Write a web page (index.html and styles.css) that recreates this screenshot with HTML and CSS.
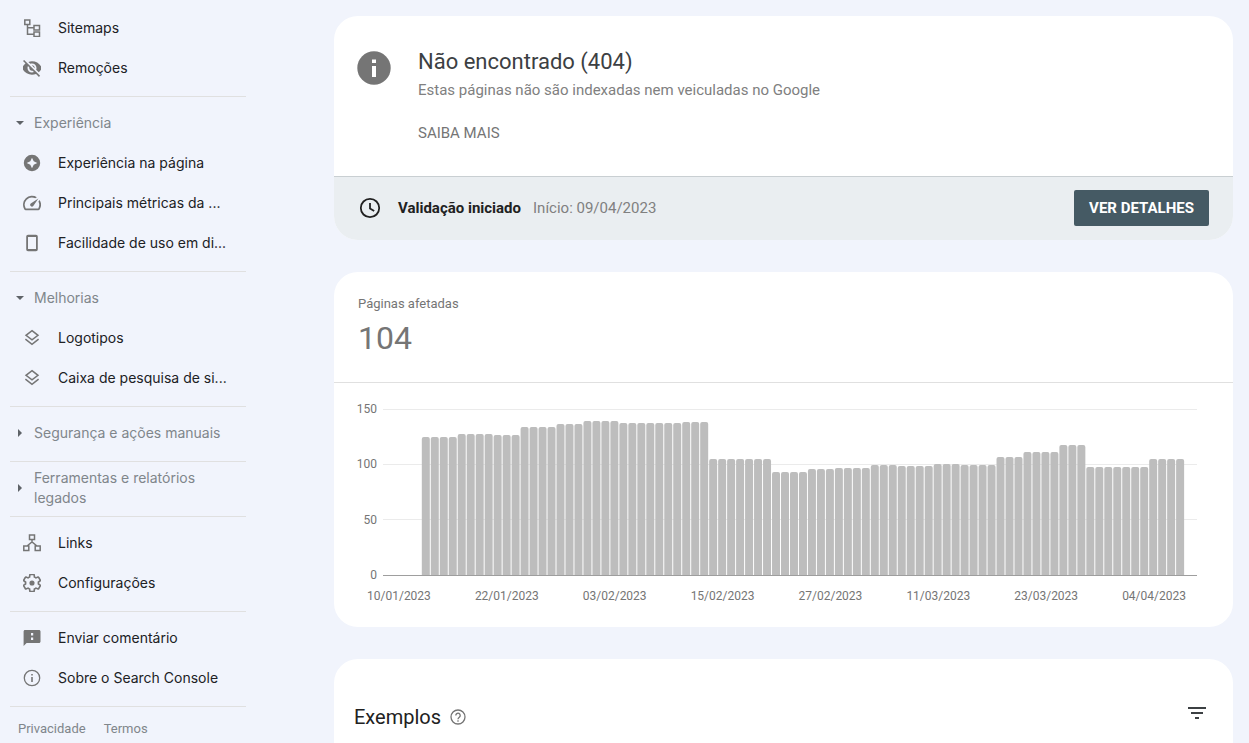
FILE: index.html
```html
<!DOCTYPE html>
<html lang="pt">
<head>
<meta charset="utf-8">
<meta name="viewport" content="width=device-width, initial-scale=1">
<title>Search Console – Não encontrado (404)</title>
<link rel="stylesheet" href="styles.css">
</head>
<body>
<div class="app">
  <nav class="sidebar" aria-label="Navegação">
    <a class="item" href="#"><svg class="icon" viewBox="0 0 18 18"><g class="line"><path d="M1.800 1h5v4.500h-5zM11 6.500h5.500v4.500H11zM11 13h5.500v4.500H11zM4.500 5.500v9.700H11M4.500 8.700H11"/></g></svg><span class="label">Sitemaps</span></a>
    <a class="item" href="#"><svg class="icon" viewBox="2 3 20 18"><path d="M12 7c2.760 0 5 2.240 5 5 0 .65-.13 1.260-.36 1.830l2.920 2.920c1.510-1.260 2.700-2.890 3.430-4.750-1.730-4.390-6-7.500-11-7.500-1.400 0-2.740.25-3.980.7l2.160 2.160C10.740 7.130 11.350 7 12 7zM2 4.270l2.280 2.280.46.46C3.080 8.300 1.780 10.020 1 12c1.730 4.390 6 7.500 11 7.500 1.550 0 3.030-.3 4.380-.84l.42.42L19.730 22 21 20.730 3.270 3 2 4.270zM7.530 9.800l1.550 1.550c-.05.21-.08.43-.08.65 0 1.660 1.340 3 3 3 .22 0 .44-.03.65-.08l1.550 1.550c-.67.33-1.410.53-2.200.53-2.760 0-5-2.240-5-5 0-.79.2-1.530.53-2.200zm4.310-.78l3.150 3.150.02-.16c0-1.660-1.340-3-3-3l-.17.01z"/></svg><span class="label">Remoções</span></a>
    <hr class="rule">
    <a class="section" href="#"><svg class="caret" viewBox="0 0 8 8"><path d="M0 2h8L4 6z"/></svg><span>Experiência</span></a>
    <a class="item" href="#"><svg class="icon" viewBox="0 0 18 18"><path fill-rule="evenodd" d="M9 .8a8.200 8.200 0 1 0 0 16.400A8.200 8.200 0 0 0 9 .8zm0 2.900l1.700 3.600L14.300 9l-3.600 1.700L9 14.300l-1.700-3.600L3.700 9l3.600-1.700z"/></svg><span class="label">Experiência na página</span></a>
    <a class="item" href="#"><svg class="icon" viewBox="2 2 20 20"><path d="M20.380 8.570l-1.230 1.850a8 8 0 0 1-.22 7.580H5.070A8 8 0 0 1 15.580 6.850l1.850-1.230A10 10 0 0 0 3.350 19a2 2 0 0 0 1.720 1h13.850a2 2 0 0 0 1.740-1 10 10 0 0 0-.27-10.440zm-9.790 6.840a2 2 0 0 0 2.830 0l5.660-8.490-8.490 5.660a2 2 0 0 0 0 2.830z"/></svg><span class="label">Principais métricas da ...</span></a>
    <a class="item" href="#"><svg class="icon" viewBox="0 0 18 18"><path fill-rule="evenodd" d="M5 .7h8A1.800 1.800 0 0 1 14.800 2.500v13a1.800 1.800 0 0 1-1.800 1.800H5a1.800 1.800 0 0 1-1.800-1.800v-13A1.800 1.800 0 0 1 5 .7zM5 3v12h8V3z"/></svg><span class="label">Facilidade de uso em di...</span></a>
    <hr class="rule">
    <a class="section" href="#"><svg class="caret" viewBox="0 0 8 8"><path d="M0 2h8L4 6z"/></svg><span>Melhorias</span></a>
    <a class="item" href="#"><svg class="icon" viewBox="0 0 18 18"><g class="line"><path d="M9 1.700l6 4.600-6 4.600-6-4.600zM2.400 10.200L9 15.300l6.600-5.100"/></g></svg><span class="label">Logotipos</span></a>
    <a class="item" href="#"><svg class="icon" viewBox="0 0 18 18"><g class="line"><path d="M9 1.700l6 4.600-6 4.600-6-4.600zM2.400 10.200L9 15.300l6.600-5.100"/></g></svg><span class="label">Caixa de pesquisa de si...</span></a>
    <hr class="rule">
    <a class="section" href="#"><svg class="caret" viewBox="0 0 8 8"><path d="M2 0v8l4-4z"/></svg><span>Segurança e ações manuais</span></a>
    <hr class="rule">
    <a class="section" href="#"><svg class="caret" viewBox="0 0 8 8"><path d="M2 0v8l4-4z"/></svg><span>Ferramentas e relatórios legados</span></a>
    <hr class="rule">
    <a class="item" href="#"><svg class="icon" viewBox="0 0 18 18"><g class="line"><path d="M6.500 1h5v4.500h-5zM.8 12h5v4.500h-5zM12.200 12h5v4.500h-5zM9 5.500V9M4 12l5-4 5 4"/></g></svg><span class="label">Links</span></a>
    <a class="item" href="#"><svg class="icon" viewBox="1.500 1.500 21 21"><path class="gear" d="M19.430 12.980c.04-.32.07-.64.07-.98s-.03-.66-.07-.98l2.110-1.650c.19-.15.24-.42.12-.64l-2-3.460c-.12-.22-.39-.3-.61-.22l-2.490 1c-.52-.4-1.080-.73-1.690-.98l-.38-2.650C14.460 2.180 14.250 2 14 2h-4c-.25 0-.46.18-.49.42l-.38 2.650c-.61.25-1.170.59-1.690.98l-2.490-1c-.23-.09-.49 0-.61.22l-2 3.460c-.13.22-.07.49.12.64l2.110 1.650c-.04.32-.07.65-.07.98s.03.66.07.98l-2.110 1.650c-.19.15-.24.42-.12.64l2 3.460c.12.22.39.3.61.22l2.490-1c.52.4 1.080.73 1.690.98l.38 2.650c.03.24.24.42.49.42h4c.25 0 .46-.18.49-.42l.38-2.650c.61-.25 1.170-.59 1.690-.98l2.490 1c.23.09.49 0 .61-.22l2-3.460c.12-.22.07-.49-.12-.64z"/><circle cx="12" cy="12" r="3"/></svg><span class="label">Configurações</span></a>
    <hr class="rule">
    <a class="item" href="#"><svg class="icon" viewBox="0 0 18 18"><path fill-rule="evenodd" d="M16 1H2C1.200 1 .6 1.600.6 2.500V17l3-3H16c.9 0 1.500-.6 1.500-1.500v-10C17.500 1.600 16.900 1 16 1zM8 4h2.200v2.600H8zM8 8.400h2.200V11H8z"/></svg><span class="label">Enviar comentário</span></a>
    <a class="item" href="#"><svg class="icon" viewBox="0 0 18 18"><circle class="thin" cx="9" cy="9" r="7.700"/><path d="M8.200 8h1.600v5H8.200zM8.200 5h1.600v1.600H8.200z"/></svg><span class="label">Sobre o Search Console</span></a>
    <hr class="rule">
    <div class="legal"><a href="#">Privacidade</a><a href="#">Termos</a></div>
  </nav>

  <main class="main">
    <section class="card">
      <div class="issue">
        <svg class="issue-icon" viewBox="0 0 34 34"><circle cx="17" cy="17" r="16.700"/><path class="cutout" d="M15 15h4v11h-4zM15 8.500h4v3.500h-4z"/></svg>
        <div>
          <h1 class="issue-title">Não encontrado (404)</h1>
          <p class="issue-text">Estas páginas não são indexadas nem veiculadas no Google</p>
          <a class="more" href="#">SAIBA MAIS</a>
        </div>
      </div>
      <div class="status">
        <svg class="clock" viewBox="0 0 24 24"><circle cx="12" cy="12" r="9.200"/><path d="M12 7v5.500l4.200 2.500"/></svg>
        <strong class="status-name">Validação iniciado</strong>
        <span class="status-date">Início: 09/04/2023</span>
        <button class="details" type="button">VER DETALHES</button>
      </div>
    </section>

    <section class="card">
      <div class="metric">
        <h2 class="metric-name">Páginas afetadas</h2>
        <p class="metric-value">104</p>
      </div>
      <div class="chart">
        <div class="y-axis"><span>150</span><span>100</span><span>50</span><span>0</span></div>
        <svg class="plot" id="plot" viewBox="0 0 814 167" preserveAspectRatio="none" role="img" aria-label="Páginas afetadas por dia">
          <path class="grid-line" d="M0 .5h814M0 55.500h814M0 110.500h814"/>
          <g id="bars" class="bars"></g>
          <path class="base-line" d="M0 166.500h814"/>
        </svg>
      </div>
      <div class="x-axis"><span>10/01/2023</span><span>22/01/2023</span><span>03/02/2023</span><span>15/02/2023</span><span>27/02/2023</span><span>11/03/2023</span><span>23/03/2023</span><span>04/04/2023</span></div>
    </section>

    <section class="card examples">
      <h2 class="examples-title">Exemplos</h2>
      <button class="icon-button" type="button" aria-label="Ajuda"><svg class="help" viewBox="0 0 16 16"><circle cx="8" cy="8" r="7"/><path d="M5.800 6.500a2.200 2.200 0 1 1 3.500 1.700C8.400 8.900 8 9.200 8 10.200M8 11.300v1.500"/></svg></button>
      <button class="icon-button filter" type="button" aria-label="Filtrar"><svg class="filter-icon" viewBox="0 0 18 12"><path d="M0 0h18v2H0zM3 5h12v2H3zM7 10h4v2H7z"/></svg></button>
    </section>
  </main>
</div>
<script src="chart.js"></script>
</body>
</html>
```
FILE: styles.css
```css
* { box-sizing: border-box; }

body {
  margin: 0;
  background: #f1f4fc;
  color: #212121;
  font-family: Roboto, "Liberation Sans", sans-serif;
  font-size: 15px;
}

h1, h2, p { margin: 0; font-weight: 400; }
a { color: inherit; text-decoration: none; }
button { font: inherit; border: 0; padding: 0; cursor: pointer; }

.app { display: flex; height: 100vh; overflow: hidden; }

/* Sidebar */
.sidebar { flex: none; width: 256px; padding: 8px 10px 0; font-family: Inter, Roboto, sans-serif; font-size: 14px; }
.item { display: flex; align-items: center; gap: 17px; height: 40px; padding: 0 0 0 13px; color: #202124; }
.label { flex: 1; white-space: nowrap; line-height: 20px; }
.icon { flex: none; width: 18px; height: 18px; fill: #757575; }
.line { fill: none; stroke: #757575; stroke-width: 1.500; }
.thin { fill: none; stroke: #757575; stroke-width: 1.300; }
.gear { fill: none; stroke: #757575; stroke-width: 1.900; }
.rule { height: 1px; margin: 8px 0 6px; border: 0; background: #e0e0e0; }
.section { display: flex; align-items: center; gap: 10px; height: 40px; padding: 0 16px 0 6px; color: #80868b; line-height: 20px; }
.caret { flex: none; width: 8px; height: 8px; fill: #5f6368; }
.legal { display: flex; gap: 18px; padding: 8px; color: #80868b; font-family: Roboto, sans-serif; font-size: 13px; line-height: 16px; }

/* Main column */
.main { flex: 1; display: flex; flex-direction: column; gap: 32px; min-width: 0; padding: 16px 16px 0 78px; }
.card { flex: none; overflow: hidden; border-radius: 24px; background: #fff; }

.issue { display: flex; gap: 27px; padding: 32px 24px 33px 23px; border-bottom: 1px solid #c9cfd2; }
.issue-icon { flex: none; width: 34px; height: 34px; margin-top: 3px; fill: #757575; }
.cutout { fill: #fff; }
.issue-title { color: #3c4043; font-size: 22px; line-height: 28px; }
.issue-text { padding-top: 4px; color: #808080; line-height: 20px; }
.more { display: block; width: max-content; margin-top: 23px; color: #757575; line-height: 20px; }

.status { display: flex; align-items: center; padding: 13px 24px 14px; background: #eaeef1; }
.clock { flex: none; width: 24px; height: 24px; margin-right: 16px; fill: none; stroke: #212121; stroke-width: 1.800; }
.status-name { font-weight: 700; margin-right: 12px; }
.status-date { color: #808080; }
.details { margin-left: auto; height: 36px; padding: 0 15px; border-radius: 2px; background: #455a64; color: #fff; font-weight: 700; }

.metric { padding: 24px; border-bottom: 1px solid #e0e0e0; color: #757575; }
.metric-name { font-size: 13px; line-height: 16px; }
.metric-value { padding-top: 6px; font-size: 32px; line-height: 40px; }

.chart { display: flex; align-items: center; gap: 6px; padding: 18px 36px 0 20px; }
.y-axis { flex: none; display: flex; flex-direction: column; justify-content: space-between; width: 23px; height: 182px; color: #757575; font-size: 12px; line-height: 16px; text-align: right; }
.plot { flex: 1; min-width: 0; height: 167px; }
.grid-line { stroke: #ebebeb; }
.base-line { stroke: #9e9e9e; }
.bars { fill: #bdbdbd; }
.x-axis { display: grid; grid-template-columns: repeat(8, 1fr); padding: 5px 25px 23px 11px; color: #757575; font-size: 12px; line-height: 16px; text-align: center; }

.examples { display: flex; align-items: center; min-height: 116px; padding: 0 27px 0 20px; }
.examples-title { font-size: 20px; line-height: 28px; }
.icon-button { display: flex; margin-left: 9px; background: none; }
.help { width: 16px; height: 16px; fill: none; stroke: #757575; stroke-width: 1.300; }
.filter { margin-left: auto; padding-bottom: 8px; }
.filter-icon { width: 18px; height: 12px; fill: #3c4043; }
```
FILE: chart.js
```js
// Each entry is a run of days that share one level: [number of days, pages].
const runs = [
  [4, 125], [4, 127], [3, 126.5], [4, 134], [3, 136], [4, 139], [7, 137],
  [3, 138], [7, 105], [4, 93], [3, 96], [4, 97], [3, 99], [4, 98.5],
  [3, 100], [4, 99], [3, 107], [4, 111], [3, 117.5], [7, 98], [4, 105]
];
const step = 8.98, first = 38.8, base = 166;
const bars = document.getElementById("bars");
let day = 0;
for (const [days, pages] of runs) {
  for (let i = 0; i < days; i++, day++) {
    const height = Math.round(pages * base / 150);
    const x = first + day * step, top = base - height;
    const bar = document.createElementNS("http://www.w3.org/2000/svg", "path");
    bar.setAttribute("d", `M${x} ${base}V${top + 2}q0-2 2-2h4q2 0 2 2V${base}z`);
    bars.append(bar);
  }
}
```
